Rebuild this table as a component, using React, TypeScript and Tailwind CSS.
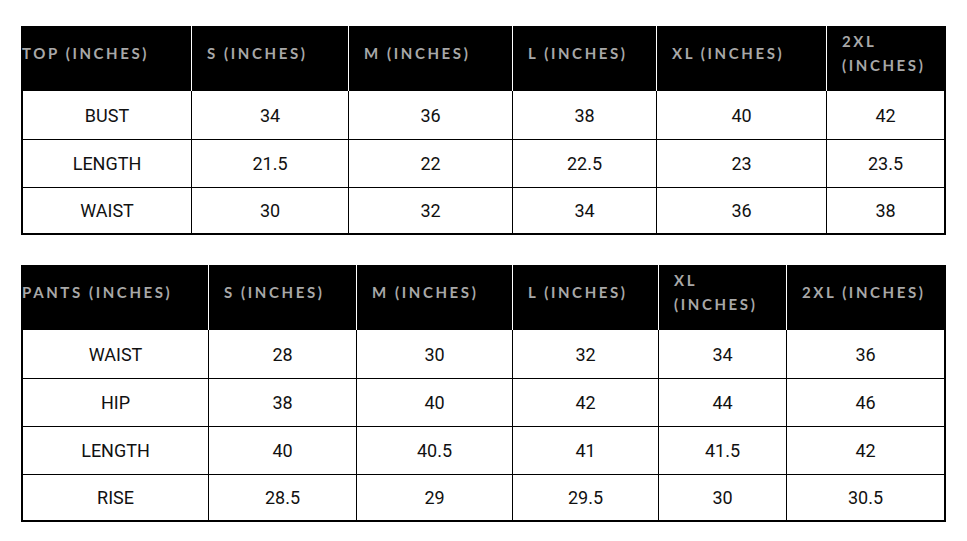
const topTable = {
  cols: "grid-cols-[170px_157px_164px_144px_170px_120px]",
  headers: [
    ["TOP (INCHES)"],
    ["S (INCHES)"],
    ["M (INCHES)"],
    ["L (INCHES)"],
    ["XL (INCHES)"],
    ["2XL", "(INCHES)"],
  ],
  rows: [
    ["BUST", "34", "36", "38", "40", "42"],
    ["LENGTH", "21.5", "22", "22.5", "23", "23.5"],
    ["WAIST", "30", "32", "34", "36", "38"],
  ],
};

const pantsTable = {
  cols: "grid-cols-[187px_148px_156px_146px_128px_160px]",
  headers: [
    ["PANTS (INCHES)"],
    ["S (INCHES)"],
    ["M (INCHES)"],
    ["L (INCHES)"],
    ["XL", "(INCHES)"],
    ["2XL (INCHES)"],
  ],
  rows: [
    ["WAIST", "28", "30", "32", "34", "36"],
    ["HIP", "38", "40", "42", "44", "46"],
    ["LENGTH", "40", "40.5", "41", "41.5", "42"],
    ["RISE", "28.5", "29", "29.5", "30", "30.5"],
  ],
};

function SizeTable({ table }: { table: typeof topTable }) {
  const last = table.headers.length - 1;
  return (
    <div className="w-[925px]">
      <div className={`grid ${table.cols} h-[65px] bg-black`}>
        {table.headers.map((lines, i) => (
          <div
            key={i}
            className={`flex flex-col justify-center pb-[12px] text-[15px] font-bold leading-[24px] tracking-[2.6px] text-[#a8a8a8] font-['Lato',sans-serif] ${
              i === 0 ? "pl-[1px]" : "border-l border-white pl-[15px]"
            }`}
          >
            {lines.map((l) => (
              <span key={l} className="whitespace-nowrap">
                {l}
              </span>
            ))}
          </div>
        ))}
      </div>
      {table.rows.map((row, r) => (
        <div key={r} className={`grid ${table.cols}`}>
          {row.map((cell, c) => (
            <div
              key={c}
              className={`flex h-[48px] items-center justify-center border-black text-[18px] text-[#111] font-['Roboto',sans-serif] ${
                c === 0 ? "border-l-2" : "border-l"
              } ${c === last ? "border-r-2" : ""} ${r > 0 ? "border-t" : ""} ${
                r === table.rows.length - 1 ? "border-b-2" : ""
              }`}
            >
              {cell}
            </div>
          ))}
        </div>
      ))}
    </div>
  );
}

export default function App() {
  return (
    <div className="w-[967px] h-[541px] bg-white pt-[26px] pl-[21px] flex flex-col gap-[30px]">
      <SizeTable table={topTable} />
      <SizeTable table={pantsTable} />
    </div>
  );
}
